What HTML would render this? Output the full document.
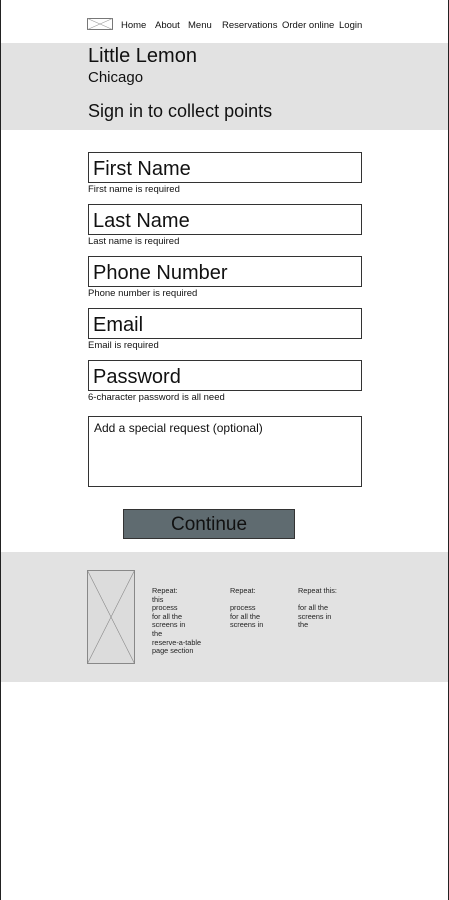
<!DOCTYPE html>
<html><head><style>
*{margin:0;padding:0;box-sizing:border-box}
body{width:449px;height:900px;background:#fff;font-family:"Liberation Sans",sans-serif;color:#111;position:relative;overflow:hidden}
.a{position:absolute}
.nav{top:20px;font-size:9.5px;white-space:nowrap}
.box{position:absolute;left:88px;width:274px;height:31px;border:1px solid #333;font-size:20px;padding:5px 0 0 4px}
.err{position:absolute;left:88px;font-size:9.5px}
.ft{font-size:7.3px;line-height:8.6px;color:#222}
</style></head><body>
<div class="a" style="left:0;top:0;width:1px;height:900px;background:#222"></div>
<div class="a" style="right:0;top:0;width:1px;height:900px;background:#222"></div>
<svg class="a" style="left:87px;top:18px" width="26" height="12"><rect x="0.5" y="0.5" width="25" height="11" fill="#fff" stroke="#777"/><path d="M0.5 0.5L25.5 11.5M25.5 0.5L0.5 11.5" stroke="#999" stroke-width="0.6"/></svg>
<div class="a nav" style="left:121px">Home</div>
<div class="a nav" style="left:155px">About</div>
<div class="a nav" style="left:188px">Menu</div>
<div class="a nav" style="left:222px">Reservations</div>
<div class="a nav" style="left:282px">Order online</div>
<div class="a nav" style="left:339px">Login</div>
<div class="a" style="left:1px;right:1px;top:43px;height:87px;background:#e2e2e2"></div>
<div class="a" style="left:88px;top:45px;font-size:20px">Little Lemon</div>
<div class="a" style="left:88px;top:69px;font-size:15px">Chicago</div>
<div class="a" style="left:88px;top:101px;font-size:18px">Sign in to collect points</div>
<div class="box" style="top:152px">First Name</div><div class="err" style="top:184px">First name is required</div>
<div class="box" style="top:204px">Last Name</div><div class="err" style="top:236px">Last name is required</div>
<div class="box" style="top:256px">Phone Number</div><div class="err" style="top:288px">Phone number is required</div>
<div class="box" style="top:308px">Email</div><div class="err" style="top:340px">Email is required</div>
<div class="box" style="top:360px">Password</div><div class="err" style="top:392px">6-character password is all need</div>
<div class="box" style="top:416px;height:71px;font-size:12px;padding:4px 0 0 5px">Add a special request (optional)</div>
<div class="a" style="left:123px;top:509px;width:172px;height:30px;background:#5f6b70;border:1px solid #333;font-size:19px;text-align:center;line-height:30px">Continue</div>
<div class="a" style="left:1px;right:1px;top:552px;height:130px;background:#e2e2e2"></div>
<svg class="a" style="left:87px;top:570px" width="48" height="94"><rect x="0.5" y="0.5" width="47" height="93" fill="#dcdcdc" stroke="#888"/><path d="M0.5 0.5L47.5 93.5M47.5 0.5L0.5 93.5" stroke="#888" stroke-width="0.6"/></svg>
<div class="a ft" style="left:152px;top:587px">Repeat:<br>this<br>process<br>for all the<br>screens in<br>the<br>reserve-a-table<br>page section</div>
<div class="a ft" style="left:230px;top:587px">Repeat:<br><br>process<br>for all the<br>screens in</div>
<div class="a ft" style="left:298px;top:587px">Repeat this:<br><br>for all the<br>screens in<br>the</div>
</body></html>
